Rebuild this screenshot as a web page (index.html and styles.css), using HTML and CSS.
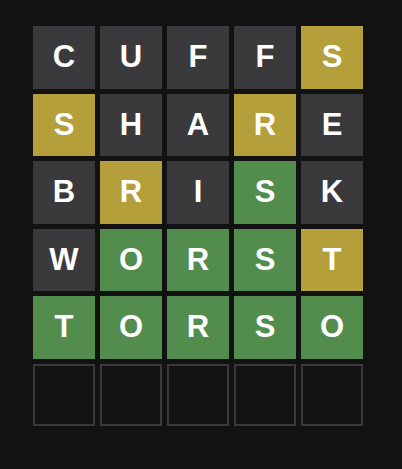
FILE: index.html
```html
<!DOCTYPE html>
<html>
<head>
<meta charset="utf-8">
<link rel="stylesheet" href="styles.css">
</head>
<body>
<div class="board">
  <div class="tile absent">C</div><div class="tile absent">U</div><div class="tile absent">F</div><div class="tile absent">F</div><div class="tile present">S</div>
  <div class="tile present">S</div><div class="tile absent">H</div><div class="tile absent">A</div><div class="tile present">R</div><div class="tile absent">E</div>
  <div class="tile absent">B</div><div class="tile present">R</div><div class="tile absent">I</div><div class="tile correct">S</div><div class="tile absent">K</div>
  <div class="tile absent">W</div><div class="tile correct">O</div><div class="tile correct">R</div><div class="tile correct">S</div><div class="tile present">T</div>
  <div class="tile correct">T</div><div class="tile correct">O</div><div class="tile correct">R</div><div class="tile correct">S</div><div class="tile correct">O</div>
  <div class="tile empty"></div><div class="tile empty"></div><div class="tile empty"></div><div class="tile empty"></div><div class="tile empty"></div>
</div>
</body>
</html>
```
FILE: styles.css
```css
html, body {
  margin: 0;
  padding: 0;
  background: #121212;
  height: 100%;
}
body {
  padding: 26px 0 0 33px;
  box-sizing: border-box;
}
.board {
  width: 330px;
  height: 400px;
  display: grid;
  grid-template-columns: repeat(5, 1fr);
  grid-template-rows: repeat(6, 1fr);
  gap: 5px;
}
.tile {
  display: flex;
  align-items: center;
  justify-content: center;
  font-family: "Liberation Sans", Arial, sans-serif;
  font-weight: bold;
  font-size: 31px;
  color: #ffffff;
  box-sizing: border-box;
}
.absent { background: #3a3a3c; }
.present { background: #b59f3b; }
.correct { background: #538d4e; }
.empty {
  background: #121212;
  border: 2px solid #3a3a3c;
}
```
